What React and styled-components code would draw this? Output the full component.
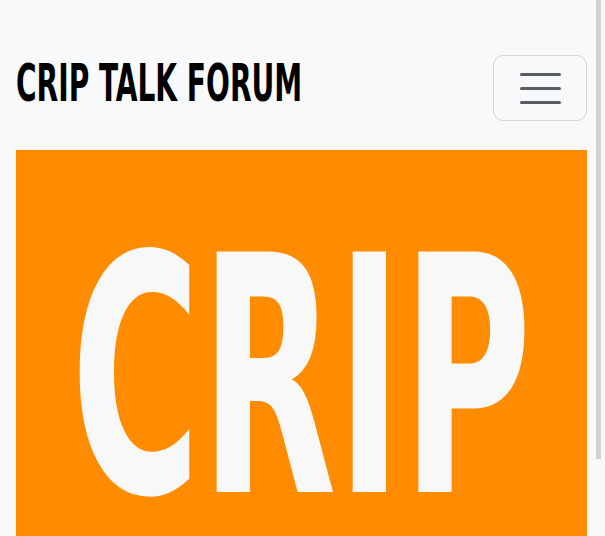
import React from 'react';
import styled, { createGlobalStyle } from 'styled-components';

const GlobalStyle = createGlobalStyle`
  html, body {
    margin: 0;
    padding: 0;
    background: #f8f9fa;
  }
  body {
    font-family: "DejaVu Sans Condensed", "DejaVu Sans", sans-serif;
  }
`;

const Page = styled.div`
  padding: 0 18px 0 16px;
`;

const Navbar = styled.nav`
  display: flex;
  align-items: center;
  justify-content: space-between;
  padding: 55px 0 29px;
`;

const Brand = styled.a`
  display: inline-block;
  padding-bottom: 11px;
  font-family: "DejaVu Sans Condensed", "DejaVu Sans", sans-serif;
  font-weight: 700;
  font-size: 52px;
  line-height: 1;
  color: #000;
  text-decoration: none;
  transform: scaleX(0.6);
  transform-origin: left center;
  white-space: nowrap;
`;

const Toggler = styled.button`
  width: 94px;
  height: 66px;
  display: flex;
  flex-direction: column;
  align-items: center;
  justify-content: center;
  gap: 11px;
  background: transparent;
  border: 1.5px solid #d5d6d8;
  border-radius: 10px;
  padding: 0;
`;

const Bar = styled.span`
  display: block;
  width: 41px;
  height: 3px;
  border-radius: 2px;
  background: #595d62;
`;

const Hero = styled.div`
  height: 520px;
  background: #ff8c00;
  display: flex;
  align-items: flex-start;
  justify-content: center;
  padding-top: 103px;
  box-sizing: border-box;
`;

const HeroText = styled.span`
  display: inline-block;
  flex-shrink: 0;
  font-family: "DejaVu Sans Condensed", "DejaVu Sans", sans-serif;
  font-weight: 700;
  font-size: 330px;
  line-height: 0.76;
  color: #f8f8f8;
  transform: scaleX(0.595);
  transform-origin: center top;
  white-space: nowrap;
`;

const ScrollThumb = styled.div`
  position: fixed;
  top: 0;
  right: 4px;
  width: 5px;
  height: 459px;
  background: #d3d3d3;
`;

export default function App() {
  return (
    <>
      <GlobalStyle />
      <Page>
        <Navbar>
          <Brand href="#">CRIP TALK FORUM</Brand>
          <Toggler aria-label="Toggle navigation">
            <Bar />
            <Bar />
            <Bar />
          </Toggler>
        </Navbar>
        <Hero>
          <HeroText>CRIP</HeroText>
        </Hero>
      </Page>
      <ScrollThumb />
    </>
  );
}
